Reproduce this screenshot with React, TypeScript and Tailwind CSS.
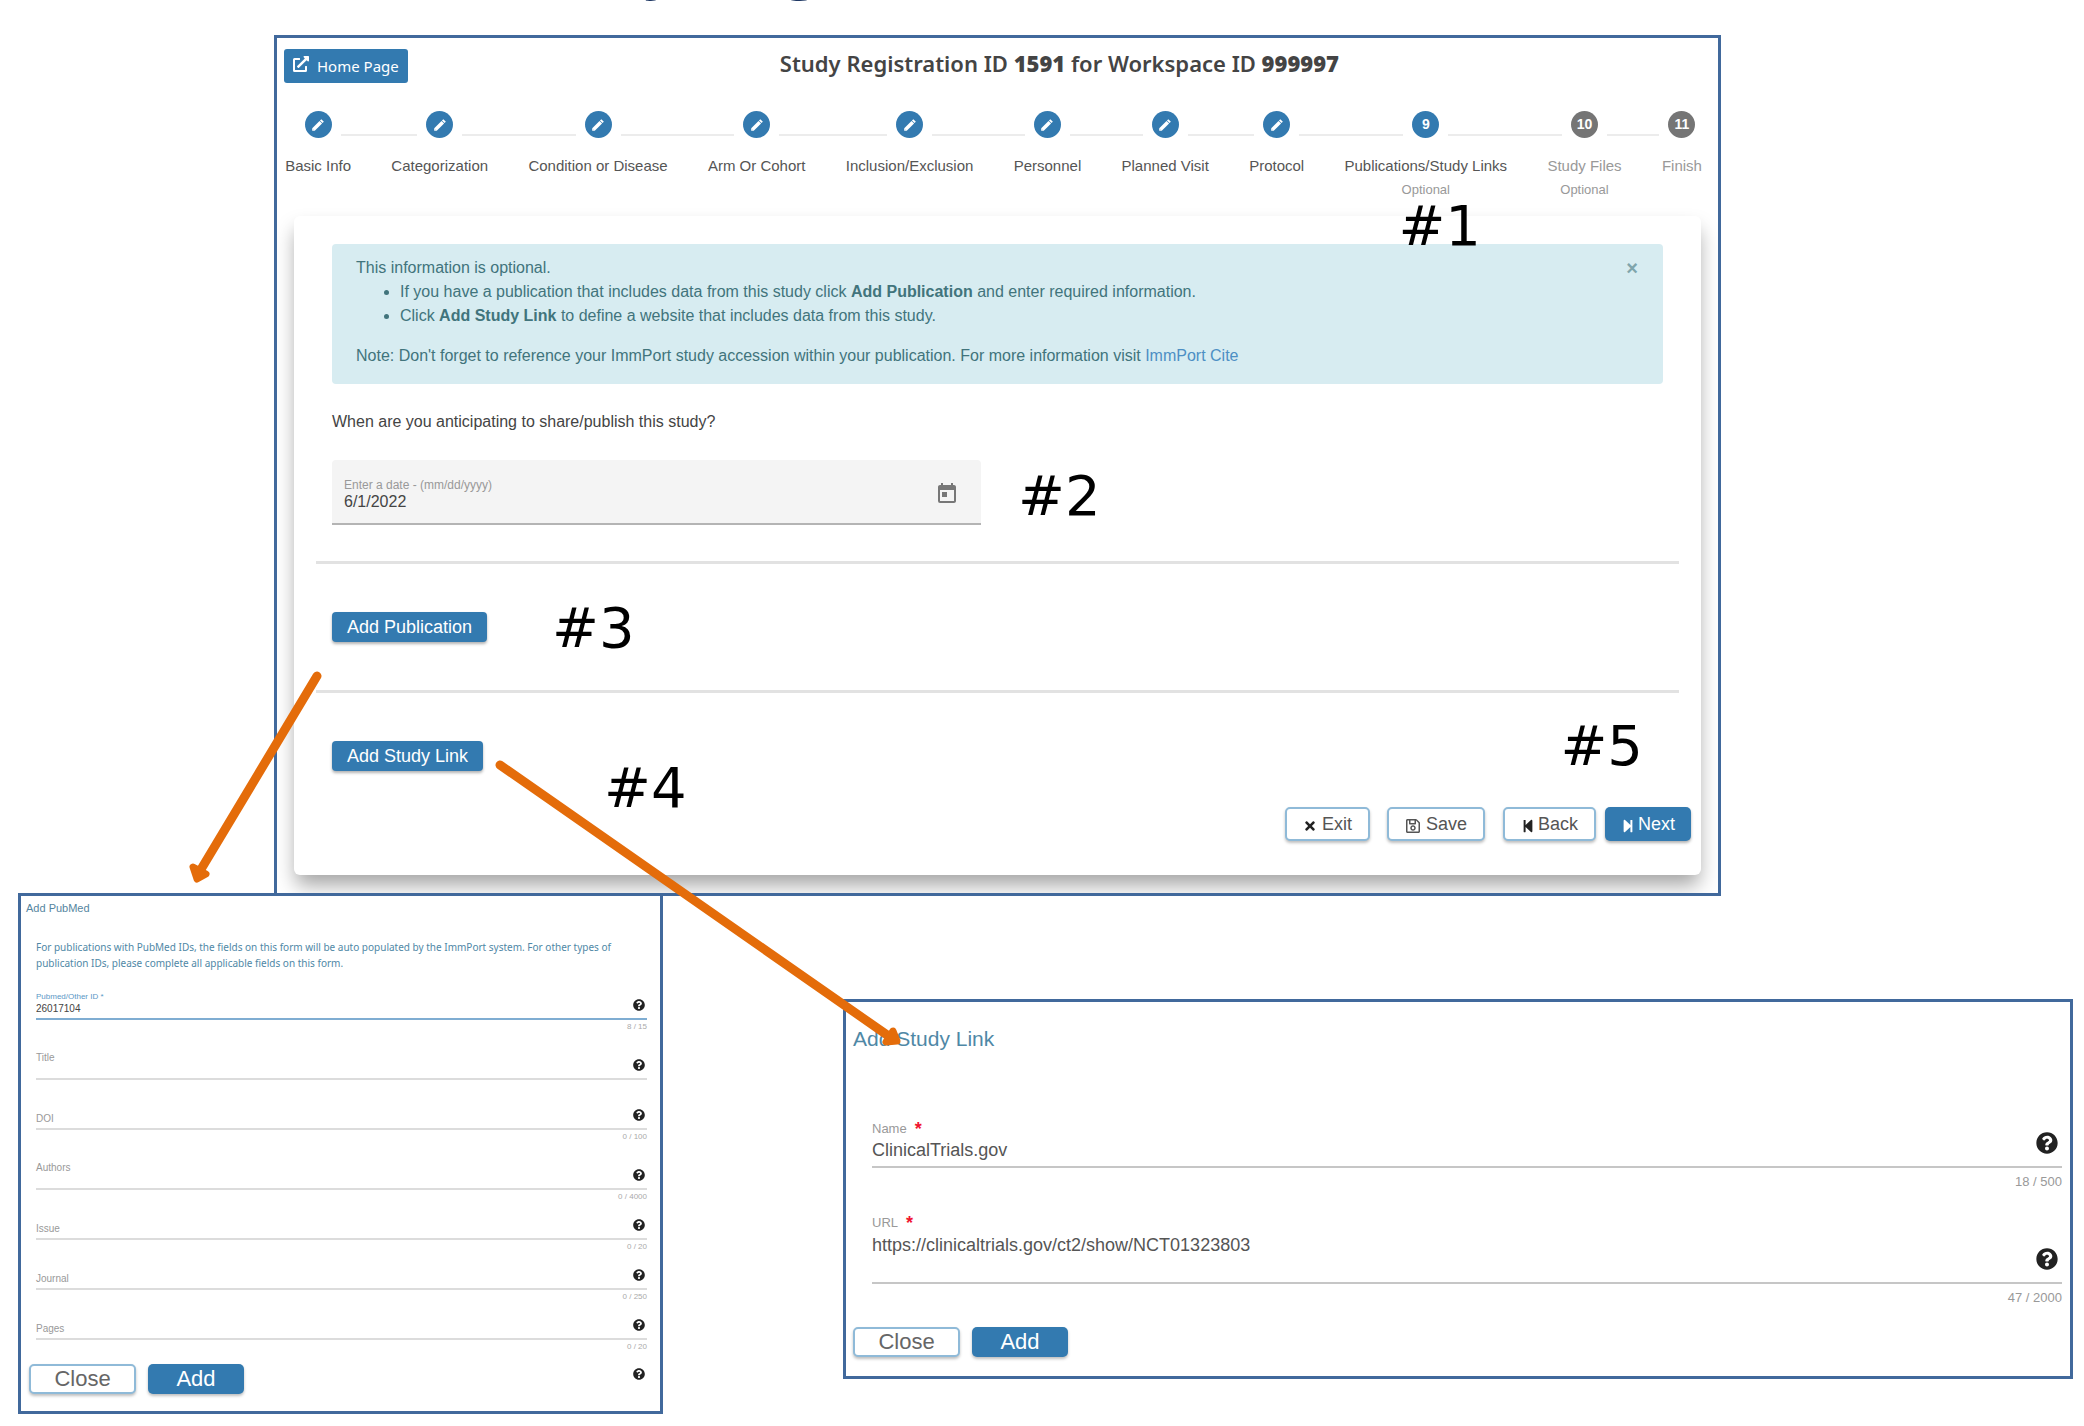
import React, { useState } from 'react';
import {
  FaExternalLinkAlt,
  FaQuestionCircle,
  FaRegSave,
  FaStepBackward,
  FaStepForward,
  FaTimes,
} from 'react-icons/fa';
import { MdToday } from 'react-icons/md';
import clsx from 'clsx';

const STEPS = [
  { label: 'Basic Info', state: 'done' },
  { label: 'Categorization', state: 'done' },
  { label: 'Condition or Disease', state: 'done' },
  { label: 'Arm Or Cohort', state: 'done' },
  { label: 'Inclusion/Exclusion', state: 'done' },
  { label: 'Personnel', state: 'done' },
  { label: 'Planned Visit', state: 'done' },
  { label: 'Protocol', state: 'done' },
  { label: 'Publications/Study Links', state: 'current', optional: true },
  { label: 'Study Files', state: 'todo', optional: true },
  { label: 'Finish', state: 'todo' },
];

const PUBMED_FIELDS = [
  { id: 'title', label: 'Title', multiline: true },
  { id: 'doi', label: 'DOI', counter: '0 / 100' },
  { id: 'authors', label: 'Authors', counter: '0 / 4000', multiline: true },
  { id: 'issue', label: 'Issue', counter: '0 / 20' },
  { id: 'journal', label: 'Journal', counter: '0 / 250' },
  { id: 'pages', label: 'Pages', counter: '0 / 20' },
];

export default function App() {
  return (
    <div className="relative min-h-[1426px] overflow-hidden bg-white font-['Liberation_Sans',Arial,sans-serif] text-[#444]">
      {/* Slide heading, mostly scrolled off the top */}
      <div className="flex h-[35px] items-start overflow-hidden pl-[494px]">
        <h1 className="-mt-[86px] font-['Noto_Sans',sans-serif] text-[66px] leading-[90px] font-bold whitespace-nowrap text-[#1f3864]">
          Study Registration
        </h1>
      </div>

      <RegistrationPanel />

      <div className="-mt-[3px] flex items-start gap-[180px] pr-[11px] pl-[18px]">
        <PubMedPanel />
        <StudyLinkPanel />
      </div>

      {/* Arrows from the buttons to their dialogs */}
      <svg className="pointer-events-none absolute top-[660px] left-[180px] h-[400px] w-[740px]" viewBox="180 660 740 400" fill="#e46c0a" stroke="#e46c0a" strokeLinecap="round" strokeLinejoin="round">
        <path d="M317 676 200 871" strokeWidth="9" />
        <path d="M193 867 206 874 197 879Z" strokeWidth="7" />
        <path d="M500 765 890 1037" strokeWidth="9" />
        <path d="M893 1031 886 1042 897 1041Z" strokeWidth="7" />
      </svg>
    </div>
  );
}

function RegistrationPanel() {
  const [showInfo, setShowInfo] = useState(true);

  return (
    <main className="relative mr-[363px] ml-[274px] border-3 border-[#41699c] bg-white">
      <div className="overflow-hidden pb-[18px]">
        <header className="flex items-center px-[7px] pt-[11px]">
          <button className="flex h-[34px] items-center gap-2 rounded-[3px] bg-[#337ab0] px-[9px] font-['Noto_Sans',sans-serif] text-[15px] text-white">
            <FaExternalLinkAlt className="mb-1 size-4" />
            Home Page
          </button>
          <h2 className="flex-1 pb-[6px] text-center font-['Noto_Sans',sans-serif] text-[22px] leading-7 font-semibold">
            Study Registration ID <b>1591</b> for Workspace ID <b>999997</b>
          </h2>
        </header>

        <Stepper />

        <section className="mx-[17px] mt-[18px] rounded-md bg-white px-[38px] pt-7 pb-[34px] shadow-[0_12px_20px_-2px_rgba(0,0,0,0.36)]">
          {showInfo && (
            <div className="relative rounded bg-[#d7ecf1] px-6 pt-3 pb-4 text-[16px] leading-6 text-[#41747c]">
              <p>This information is optional.</p>
              <ul className="list-disc pl-11">
                <li>
                  If you have a publication that includes data from this study click <b>Add Publication</b> and enter required information.
                </li>
                <li>
                  Click <b>Add Study Link</b> to define a website that includes data from this study.
                </li>
              </ul>
              <p className="mt-4">
                Note: Don't forget to reference your ImmPort study accession within your publication. For more information visit{' '}
                <a href="#cite" className="text-[#4d8fc4]">ImmPort Cite</a>
              </p>
              <button
                aria-label="Dismiss"
                onClick={() => setShowInfo(false)}
                className="absolute top-3 right-[25px] text-[20px] leading-6 font-bold text-[#7fa5ac]"
              >
                ×
              </button>
            </div>
          )}

          <p className="mt-[26px] text-[16px] leading-6">When are you anticipating to share/publish this study?</p>

          <div className="mt-[26px] flex h-[65px] w-[649px] max-w-full items-center justify-between rounded-t border-b-2 border-[#b4b4b4] bg-[#f4f4f4] pr-[22px] pl-3">
            <div className="flex flex-1 flex-col pt-1">
              <label htmlFor="share-date" className="text-[12px] leading-4 text-[#999]">Enter a date - (mm/dd/yyyy)</label>
              <input id="share-date" defaultValue="6/1/2022" className="h-[18px] bg-transparent text-[16px] leading-[18px] outline-none" />
            </div>
            <button aria-label="Open calendar" className="mt-1 text-[#777]">
              <MdToday className="size-6" />
            </button>
          </div>

          <hr className="-mx-4 mt-9 border-t-3 border-[#e2e2e2]" />
          <PrimaryButton className="mt-12 px-[15px] text-[18px]">Add Publication</PrimaryButton>
          <hr className="-mx-4 mt-12 border-t-3 border-[#e2e2e2]" />
          <PrimaryButton className="mt-12 px-[15px] text-[18px]">Add Study Link</PrimaryButton>

          <div className="-mr-7 mt-9 flex justify-end text-[18px] text-[#555]">
            <OutlineButton className="mr-[17px] h-[34px] gap-[5px] px-4">
              <FaTimes className="mt-1 size-[14px] text-[#222]" />
              Exit
            </OutlineButton>
            <OutlineButton className="mr-[18px] h-[34px] gap-[5px] px-4">
              <FaRegSave className="mt-1 size-4" />
              Save
            </OutlineButton>
            <OutlineButton className="mr-[9px] h-[34px] gap-[3px] px-4">
              <FaStepBackward className="mt-1 size-[14px] text-[#222]" />
              Back
            </OutlineButton>
            <button className="flex h-[34px] items-center gap-[3px] rounded-[5px] bg-[#337ab0] px-4 text-white shadow-[0_2px_3px_rgba(0,0,0,0.3)]">
              <FaStepForward className="mt-1 size-[14px]" />
              Next
            </button>
          </div>
        </section>
      </div>

      {/* Callout numbers */}
      <Callout className="top-[166px] right-[237px]">#1</Callout>
      <Callout className="top-[436px] left-[741px]">#2</Callout>
      <Callout className="top-[568px] left-[275px]">#3</Callout>
      <Callout className="top-[728px] left-[327px]">#4</Callout>
      <Callout className="top-[686px] right-[75px]">#5</Callout>
    </main>
  );
}

function Stepper() {
  return (
    <ol className="-mr-1 -ml-3 mt-7 flex items-start">
      {STEPS.map((step, i) => (
        <li key={step.label} className="flex flex-auto flex-col text-center whitespace-nowrap">
          <div className="flex items-start gap-[9px]">
            <StepLine hidden={i === 0} />
            <span
              className={clsx(
                'flex size-[27px] items-center justify-center rounded-full text-[14px] font-bold text-white',
                step.state === 'todo' ? 'bg-[#757575]' : 'bg-[#337ab0]'
              )}
            >
              {step.state === 'done' ? <PencilMark /> : i + 1}
            </span>
            <StepLine hidden={i === STEPS.length - 1} />
          </div>
          <span className={clsx('mt-[18px] px-[15px] text-[15px] leading-5', step.state === 'todo' ? 'text-[#999]' : 'text-[#555]')}>
            {step.label}
          </span>
          <span className="mt-[6px] h-4 text-[13px] leading-4 text-[#999]">{step.optional && 'Optional'}</span>
        </li>
      ))}
    </ol>
  );
}

function StepLine({ hidden }: { hidden: boolean }) {
  return <span className={clsx('mt-[23px] h-[2px] flex-1', !hidden && 'bg-[#ececec]')} />;
}

function PencilMark() {
  return (
    <svg viewBox="0 0 18 18" className="size-[18px]" fill="none" stroke="#fff">
      <path d="M4.5 13.5 11.8 6.2" strokeWidth="3.6" />
      <path d="M12.2 5.8 13.6 4.4" strokeWidth="3.6" />
      <path d="M3.2 14.8 3.2 12 6 14.8Z" fill="#fff" stroke="none" />
    </svg>
  );
}

function PubMedPanel() {
  return (
    <section className="relative w-[645px] border-3 border-[#41699c] bg-white pt-1 pb-[17px]">
      <h2 className="pl-[5px] text-[11px] leading-4 text-[#5585a0]">Add PubMed</h2>
      <div className="pr-[13px] pl-[15px]">
        <p className="mt-[23px] mb-[19px] font-['Noto_Sans',sans-serif] text-[10px] leading-4 text-[#4f88a6]">
          For publications with PubMed IDs, the fields on this form will be auto populated by the ImmPort system. For other types of publication IDs, please complete all applicable fields on this form.
        </p>

        <div className="flex h-[30px] items-end border-b-2 border-[#7fadd2] pb-[3px]">
          <div className="flex flex-1 flex-col">
            <label htmlFor="pubmed-id" className="text-[8px] leading-3 text-[#5b97c6]">Pubmed/Other ID *</label>
            <input id="pubmed-id" defaultValue="26017104" className="h-3 text-[10px] leading-3 outline-none" />
          </div>
          <HelpButton className="mr-[2px] mb-1 size-3" />
        </div>
        <Counter>8 / 15</Counter>

        {PUBMED_FIELDS.map((field) => (
          <React.Fragment key={field.id}>
            <div
              className={clsx(
                'flex items-end border-b-2 border-[#dcdcdc] pb-[3px] text-[10px] leading-3',
                field.multiline ? 'h-10' : 'h-[30px]'
              )}
            >
              <label htmlFor={field.id} className={clsx('text-[#999]', field.multiline && 'mt-3 self-start')}>{field.label}</label>
              {field.multiline ? (
                <textarea id={field.id} className="h-6 flex-1 resize-none outline-none" />
              ) : (
                <input id={field.id} className="h-3 flex-1 outline-none" />
              )}
              <HelpButton className="mr-[2px] mb-1 size-3" />
            </div>
            <Counter>{field.counter}</Counter>
          </React.Fragment>
        ))}
      </div>

      <div className="mt-1 flex items-start pr-[13px] pl-2">
        <DialogButtons />
        <HelpButton className="mt-1 mr-[2px] ml-auto size-3" />
      </div>
    </section>
  );
}

function StudyLinkPanel() {
  return (
    <section className="mt-[106px] flex-1 border-3 border-[#41699c] bg-white pt-[23px] pb-[19px]">
      <h2 className="pl-[7px] text-[21px] leading-7 text-[#4f88a6]">Add Study Link</h2>

      <div className="mt-[67px] pr-2 pl-[26px]">
        <div className="flex items-end border-b-2 border-[#c6c6c6] pb-[3px]">
          <div className="flex flex-1 flex-col">
            <RequiredLabel htmlFor="link-name">Name</RequiredLabel>
            <input id="link-name" defaultValue="ClinicalTrials.gov" className="h-[25px] text-[18px] leading-6 text-[#555] outline-none" />
          </div>
          <HelpButton className="mr-1 mb-[9px] size-[22px]" />
        </div>
        <p className="mt-[5px] text-right text-[13px] leading-[18px] text-[#999]">18 / 500</p>

        <div className="mt-[23px] flex items-end border-b-2 border-[#c6c6c6] pb-[3px]">
          <div className="flex flex-1 flex-col">
            <RequiredLabel htmlFor="link-url">URL</RequiredLabel>
            <textarea
              id="link-url"
              defaultValue="https://clinicaltrials.gov/ct2/show/NCT01323803"
              className="h-[47px] resize-none pt-px text-[18px] leading-6 text-[#555] outline-none"
            />
          </div>
          <HelpButton className="mr-1 mb-[9px] size-[22px]" />
        </div>
        <p className="mt-[5px] text-right text-[13px] leading-[18px] text-[#999]">47 / 2000</p>
      </div>

      <div className="mt-5 flex pl-[7px]">
        <DialogButtons />
      </div>
    </section>
  );
}

function DialogButtons() {
  return (
    <div className="flex gap-3 text-[22px] text-[#666]">
      <OutlineButton className="h-[30px] w-[107px] justify-center leading-[26px]">Close</OutlineButton>
      <button className="h-[30px] w-24 rounded-[5px] bg-[#337ab0] leading-[28px] text-white shadow-[0_2px_3px_rgba(0,0,0,0.25)]">Add</button>
    </div>
  );
}

interface ButtonProps {
  className?: string;
  children: React.ReactNode;
}

function PrimaryButton({ className, children }: ButtonProps) {
  return (
    <button className={clsx('block h-[30px] rounded bg-[#337ab0] leading-[28px] text-white shadow-[0_2px_3px_rgba(0,0,0,0.3)]', className)}>
      {children}
    </button>
  );
}

function OutlineButton({ className, children }: ButtonProps) {
  return (
    <button className={clsx('flex items-center rounded-[5px] border-2 border-[#8fbad8] bg-white shadow-[0_2px_3px_rgba(0,0,0,0.25)]', className)}>
      {children}
    </button>
  );
}

function HelpButton({ className }: { className?: string }) {
  return (
    <button aria-label="Help" className={clsx('shrink-0 text-[#222]', className)}>
      <FaQuestionCircle className="size-full" />
    </button>
  );
}

function RequiredLabel({ htmlFor, children }: { htmlFor: string; children: React.ReactNode }) {
  return (
    <label htmlFor={htmlFor} className="flex gap-2 text-[13px] leading-[18px] text-[#999]">
      {children}
      <span className="text-[18px] font-bold text-[#f0142f]">*</span>
    </label>
  );
}

function Counter({ children }: { children?: React.ReactNode }) {
  return <p className="h-5 text-right text-[8px] leading-[14px] text-[#aaa]">{children}</p>;
}

function Callout({ className, children }: ButtonProps) {
  return (
    <span className={clsx("absolute font-['DejaVu_Sans',sans-serif] text-[56px] leading-[44px] text-black", className)}>
      {children}
    </span>
  );
}
